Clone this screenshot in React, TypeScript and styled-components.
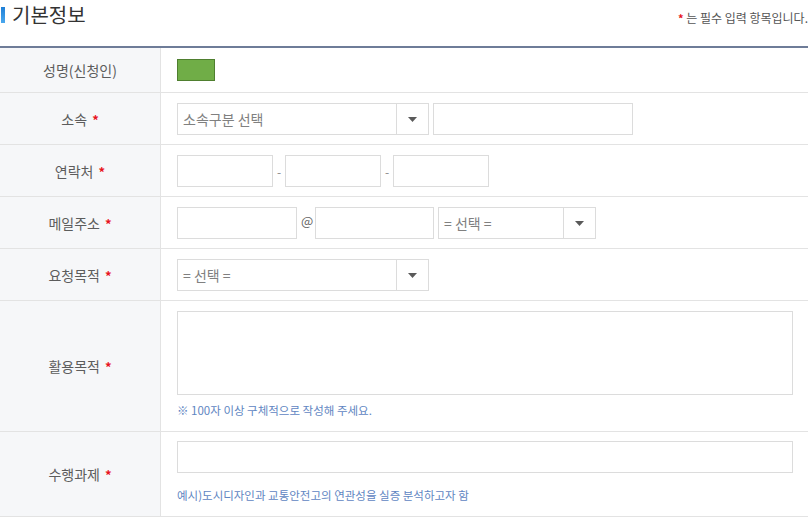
import React from "react"
import styled, { createGlobalStyle } from "styled-components"

const GlobalStyle = createGlobalStyle`
  body {
    margin: 0;
    background: #fff;
    font-family: "Noto Sans CJK KR", "Noto Sans", sans-serif;
  }
`;

export default function App() {
    return (
        <Wrapper>
            <GlobalStyle />
            <Header>
                <Title>기본정보</Title>
                <Notice><Star $small>*</Star> 는 필수 입력 항목입니다.</Notice>
            </Header>
            <Table>
                <tbody>
                    <tr>
                        <Th>성명(신청인)</Th>
                        <Td $compact><NameBox /></Td>
                    </tr>
                    <tr>
                        <Th>소속 <Star>*</Star></Th>
                        <Td>
                            <Line>
                                <Select $w={252} placeholder="소속구분 선택" />
                                <Input $w={200} />
                            </Line>
                        </Td>
                    </tr>
                    <tr>
                        <Th>연락처 <Star>*</Star></Th>
                        <Td>
                            <Line>
                                <Input $w={96} />
                                <Sep>-</Sep>
                                <Input $w={96} />
                                <Sep>-</Sep>
                                <Input $w={96} />
                            </Line>
                        </Td>
                    </tr>
                    <tr>
                        <Th>메일주소 <Star>*</Star></Th>
                        <Td>
                            <Line>
                                <Input $w={120} />
                                <At>@</At>
                                <Input $w={119} />
                                <Select $w={158} placeholder="= 선택 =" />
                            </Line>
                        </Td>
                    </tr>
                    <tr>
                        <Th>요청목적 <Star>*</Star></Th>
                        <Td>
                            <Line>
                                <Select $w={252} placeholder="= 선택 =" />
                            </Line>
                        </Td>
                    </tr>
                    <tr>
                        <Th>활용목적 <Star>*</Star></Th>
                        <Td>
                            <TextArea />
                            <Help $gap={6} $after={3}>※ 100자 이상 구체적으로 작성해 주세요.</Help>
                        </Td>
                    </tr>
                    <tr>
                        <Th>수행과제 <Star>*</Star></Th>
                        <Td $tall>
                            <Input $w={616} />
                            <Help $gap={13} $after={0}>예시)도시디자인과 교통안전고의 연관성을 실증 분석하고자 함</Help>
                        </Td>
                    </tr>
                </tbody>
            </Table>
        </Wrapper>
    )
}

function Select({ $w, placeholder }: { $w: number; placeholder: string }) {
    return (
        <SelectBox style={{ width: $w }}>
            <SelectText>{placeholder}</SelectText>
            <Arrow>
                <svg width="9" height="5" viewBox="0 0 9 5">
                    <path d="M0 0 H9 L4.5 5 Z" fill="#5a5a5a" />
                </svg>
            </Arrow>
        </SelectBox>
    )
}

const Wrapper = styled.div`
  width: 808px;
  color: #555;
`;
const Header = styled.div`
  height: 46px;
  display: flex;
  justify-content: space-between;
  align-items: flex-start;
  border-bottom: 2px solid #6e7c98;
  box-sizing: content-box;
`;
const Title = styled.h2`
  margin: 0;
  padding: 2px 0 0 12px;
  font-size: 20px;
  font-weight: 400;
  line-height: 26px;
  color: #333;
  position: relative;
  &::before {
    content: "";
    position: absolute;
    left: 1px;
    top: 7px;
    width: 4px;
    height: 16px;
    background: linear-gradient(#1e7fd6, #4aa8ee);
  }
`;
const Notice = styled.div`
  margin-top: 9px;
  font-size: 12px;
  line-height: 18px;
  color: #555;
`;
const Star = styled.span<{ $small?: boolean }>`
  color: #e8141e;
  font-weight: 700;
  font-size: ${p => (p.$small ? "11px" : "13px")};
  margin-left: ${p => (p.$small ? "0" : "2px")};
`;
const Table = styled.table`
  width: 808px;
  border-collapse: collapse;
  table-layout: fixed;
  tr {
    border-bottom: 1px solid #e3e3e3;
  }
`;
const Th = styled.th`
  width: 160px;
  background: #f6f7f9;
  border-right: 1px solid #e3e3e3;
  font-size: 14px;
  font-weight: 400;
  color: #5c5c5c;
  text-align: center;
  padding: 0;
`;
const Td = styled.td<{ $compact?: boolean; $tall?: boolean }>`
  padding: ${p => (p.$compact ? "11px 16px 11px" : p.$tall ? "9px 16px 12px" : "10px 16px 9px")};
  vertical-align: top;
`;
const Line = styled.div`
  display: flex;
  align-items: center;
  gap: 4px;
`;
const NameBox = styled.div`
  width: 36px;
  height: 20px;
  background: #70ad47;
  border: 1px solid #4f7f2f;
`;
const Input = styled.div<{ $w: number }>`
  width: ${p => p.$w}px;
  height: 32px;
  box-sizing: border-box;
  border: 1px solid #dcdcdc;
  background: #fff;
  flex: none;
`;
const SelectBox = styled.div`
  height: 32px;
  box-sizing: border-box;
  border: 1px solid #dcdcdc;
  display: flex;
  flex: none;
  background: #fff;
`;
const SelectText = styled.div`
  flex: 1;
  padding-left: 5px;
  font-size: 14px;
  line-height: 30px;
  color: #808080;
`;
const Arrow = styled.div`
  width: 31px;
  border-left: 1px solid #dcdcdc;
  display: flex;
  align-items: center;
  justify-content: center;
`;
const Sep = styled.span`
  width: 4px;
  font-size: 12px;
  color: #888;
  text-align: center;
`;
const At = styled.span`
  width: 10px;
  margin-top: -6px;
  font-size: 13px;
  color: #666;
  text-align: center;
`;
const TextArea = styled.div`
  width: 616px;
  height: 84px;
  box-sizing: border-box;
  border: 1px solid #dcdcdc;
`;
const Help = styled.p<{ $gap: number; $after: number }>`
  margin: ${p => p.$gap}px 0 ${p => p.$after}px;
  font-size: 11.5px;
  line-height: 18px;
  color: #5f86c2;
`;
